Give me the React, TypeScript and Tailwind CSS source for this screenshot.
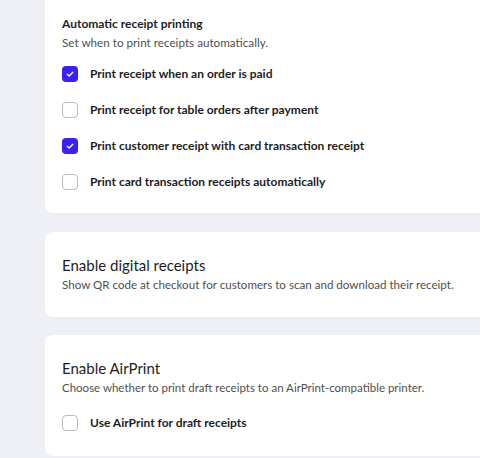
import React from 'react';

const font = { fontFamily: 'Lato, "Open Sans", sans-serif' };

function Check({ checked, label }: { checked: boolean; label: string }) {
  return (
    <label className="flex h-[20px] items-center gap-[12px]">
      {checked ? (
        <span className="grid h-[16px] w-[16px] place-items-center rounded-[4px] bg-[#3a20f2]">
          <svg width="10" height="10" viewBox="0 0 10 10" fill="none">
            <path d="M2.2 5.2 4.2 7 7.8 3.2" stroke="white" strokeWidth="1.3" strokeLinecap="round" strokeLinejoin="round" />
          </svg>
        </span>
      ) : (
        <span className="h-[16px] w-[16px] rounded-[4px] border-[1.5px] border-[#bdbdbd] bg-white" />
      )}
      <span className="text-[12px] font-bold text-[#1d1d1f]">{label}</span>
    </label>
  );
}

export default function App() {
  return (
    <div className="h-[458px] w-[480px] overflow-hidden bg-[#eef0f5] pl-[45px]" style={font}>
      <div className="-mr-4 -mt-[12px] rounded-lg bg-white pb-[21px] pl-[17px] pt-[26px]">
        <div className="text-[12px] font-bold leading-[19px] text-[#1d1d1f]">Automatic receipt printing</div>
        <div className="text-[11.7px] leading-[18px] text-[#4f4f4f]">Set when to print receipts automatically.</div>
        <div className="mt-[13px] flex flex-col gap-[16px]">
          <Check checked label="Print receipt when an order is paid" />
          <Check checked={false} label="Print receipt for table orders after payment" />
          <Check checked label="Print customer receipt with card transaction receipt" />
          <Check checked={false} label="Print card transaction receipts automatically" />
        </div>
      </div>

      <div className="-mr-4 mt-[19px] rounded-lg bg-white pb-[23px] pl-[17px] pt-[22px]">
        <div className="text-[15px] leading-[22px] text-[#1d1d1f]">Enable digital receipts</div>
        <div className="text-[11.6px] leading-[18px] text-[#4f4f4f]">
          Show QR code at checkout for customers to scan and download their receipt.
        </div>
      </div>

      <div className="-mr-4 mt-[18px] rounded-lg bg-white pb-[23px] pl-[17px] pt-[22px]">
        <div className="text-[15px] leading-[22px] text-[#1d1d1f]">Enable AirPrint</div>
        <div className="text-[11.5px] leading-[18px] text-[#4f4f4f]">
          Choose whether to print draft receipts to an AirPrint-compatible printer.
        </div>
        <div className="mt-[16px]">
          <Check checked={false} label="Use AirPrint for draft receipts" />
        </div>
      </div>
    </div>
  );
}
